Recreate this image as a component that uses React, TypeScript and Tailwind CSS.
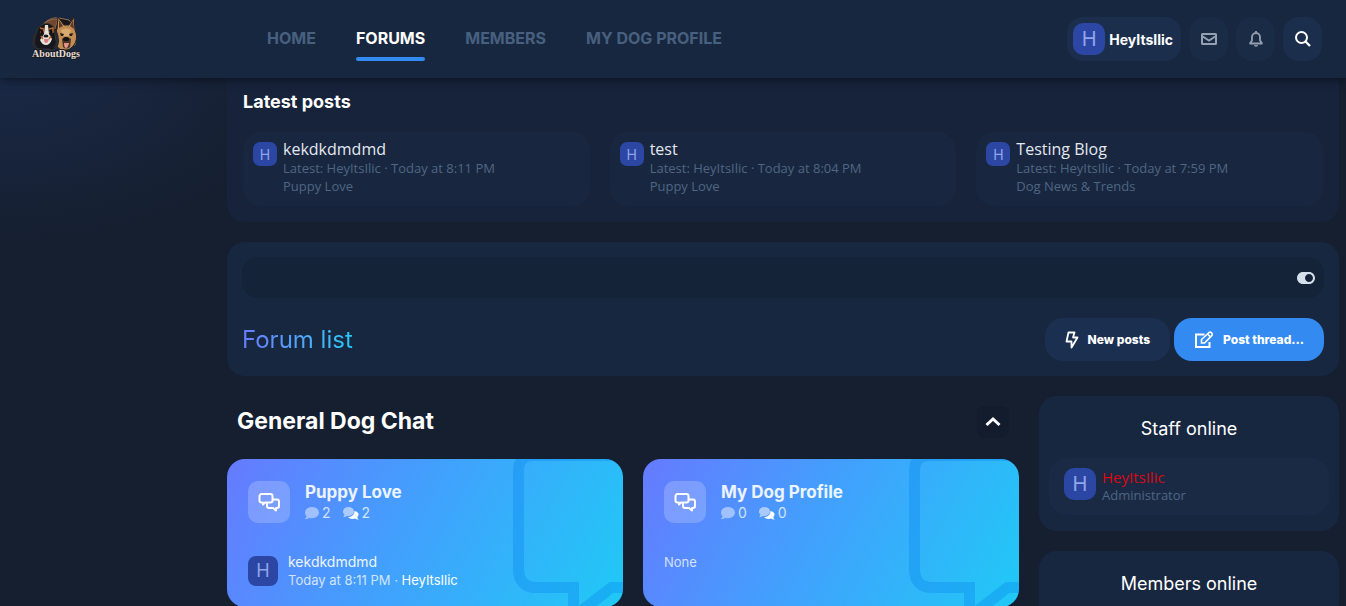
import { FaComment, FaToggleOn } from "react-icons/fa";
import clsx from "clsx";

const navItems = [
  { label: "HOME", active: false },
  { label: "FORUMS", active: true },
  { label: "MEMBERS", active: false },
  { label: "MY DOG PROFILE", active: false }
];

const latestPosts = [
  { title: "kekdkdmdmd", time: "Today at 8:11 PM", forum: "Puppy Love" },
  { title: "test", time: "Today at 8:04 PM", forum: "Puppy Love" },
  { title: "Testing Blog", time: "Today at 7:59 PM", forum: "Dog News & Trends" }
];

type Forum = {
  name: string;
  threads: number;
  messages: number;
  last?: { title: string; time: string; user: string };
};

const forums: Forum[] = [
  {
    name: "Puppy Love",
    threads: 2,
    messages: 2,
    last: { title: "kekdkdmdmd", time: "Today at 8:11 PM", user: "HeyItsIlic" }
  },
  { name: "My Dog Profile", threads: 0, messages: 0 }
];

function Avatar({ className }: { className: string }) {
  return (
    <span
      aria-hidden
      className={clsx(
        "flex shrink-0 items-center justify-center bg-[#2b47a3] font-['Inter',sans-serif] text-[#92a4ec]",
        className
      )}
    >
      H
    </span>
  );
}

function Logo() {
  return (
    <svg viewBox="0 0 48 46" className="h-[46px] w-12" role="img" aria-label="AboutDogs">
      <path d="M6 17C12 4 20 1 27 2l10 2c6 6 8 17 6 25H8z" fill="#17181d" stroke="#957047" />
      <path d="M8 12Q15 2 26 3l-3 10Z" fill="#70482f" stroke="#b88a61" strokeWidth=".6" />
      <path d="M25 13 26 1l6 8h5l5-8 1 13c4 8 0 18-8 20h-6c-7-4-8-13-4-21Z" fill="#c28d53" stroke="#26201c" />
      <path d="m27 4 4 6-4 2Zm14 0-3 6 4 3Z" fill="#5b392b" />
      <path d="M29 14q5-3 10 0l-2 6h-6Z" fill="#d9aa70" />
      <path d="m28 17 4 1-1 2h-2m8-2 4-1-1 3h-2" fill="#241b19" />
      <path d="M30 23q4-4 9 0l-1 8q-4 3-7 0Z" fill="#4b3326" />
      <ellipse cx="34" cy="23" rx="3" ry="2" fill="#0e1015" />
      <path d="M32 27h5q-1 5-3 5t-2-5" fill="#e59588" />
      <path d="M6 12Q14 3 22 11l3 20q-4 5-8 2H8q-7 0-6-8Z" fill="#15171c" stroke="#4b3a31" strokeWidth=".7" />
      <path d="M13 9h3l1 9 3 5q-2 6-6 6t-6-5l4-6Z" fill="#e8e1d7" />
      <path d="m8 12 4 1-1 3H8m9-3 4-1v4h-4m-8 4 2 3m8-3-2 3" stroke="#bb652f" strokeWidth="1.500" fill="none" />
      <circle cx="10" cy="16" r="1.400" fill="#090a0d" />
      <circle cx="19" cy="16" r="1.400" fill="#090a0d" />
      <ellipse cx="14" cy="20" rx="2.500" ry="1.600" fill="#16171b" />
      <path d="M12 23h5q-1 4-3 4t-2-4" fill="#db7c7e" />
      <path d="M3 18C1 25 1 31 5 33m18-19c4 9 3 16-1 18" stroke="#292a30" strokeWidth="3" fill="none" />
      <text x="24" y="41" textAnchor="middle" fontFamily="Liberation Serif, serif" fontSize="10" fontWeight="700" fill="#e2ddd8" stroke="#1b1b20" strokeWidth="2" paintOrder="stroke">
        AboutDogs
      </text>
    </svg>
  );
}

function ChatsIcon({ className }: { className: string }) {
  return (
    <svg viewBox="0 0 24 24" className={className} fill="none" stroke="currentColor" strokeWidth="2" strokeLinejoin="round" aria-hidden>
      <path d="M8 12.500 6 14.500v-2H4.500a2 2 0 0 1-2-2V6a2 2 0 0 1 2-2h9a2 2 0 0 1 2 2v4.500a2 2 0 0 1-2 2Z" />
      <path d="M16 9.500h4a2 2 0 0 1 2 2V16a2 2 0 0 1-2 2h-1v2.500L16 18h-4a2 2 0 0 1-2-2v-3.500" />
    </svg>
  );
}

function MailIcon() {
  return (
    <svg viewBox="0 0 18 14" className="h-3.5 w-[18px]" fill="none" stroke="currentColor" strokeWidth="2" aria-hidden>
      <rect x="2" y="2" width="14" height="10" rx=".5" />
      <path d="m2 4 7 4.500L16 4" />
    </svg>
  );
}

function BellIcon() {
  return (
    <svg viewBox="0 0 16 18" className="h-[18px] w-4" fill="none" stroke="currentColor" strokeWidth="1.800" strokeLinejoin="round" aria-hidden>
      <path d="M8 3C5.500 3 4 5 4 7v3.500L2.200 13v.5h11.600V13L12 10.500V7c0-2-1.500-4-4-4ZM8 1v2" />
      <path d="M6 15.500q2 2 4 0Z" fill="currentColor" strokeWidth=".6" />
    </svg>
  );
}

function SearchIcon() {
  return (
    <svg viewBox="0 0 18 18" className="size-[18px]" fill="none" stroke="currentColor" strokeWidth="2" aria-hidden>
      <circle cx="7.500" cy="7.500" r="5.500" />
      <path d="m11.500 11.500 4.500 4.500" strokeWidth="2.300" />
    </svg>
  );
}

function BoltIcon() {
  return (
    <svg viewBox="0 0 14 18" className="h-[18px] w-3.5" fill="none" stroke="currentColor" strokeWidth="1.800" strokeLinejoin="round" aria-hidden>
      <path d="M3.500 1.500h6l-1.500 5h4.500l-6 10v-6h-5Z" />
    </svg>
  );
}

function ComposeIcon() {
  return (
    <svg viewBox="0 0 20 18" className="h-[18px] w-5" fill="none" stroke="currentColor" strokeWidth="2" aria-hidden>
      <path d="M10.500 3.500H2V16h13.500v-5" />
      <path d="m7.500 8.500 7.500-7q1.200-.9 2.500.3t.5 2.600L10.500 12H7.500Zm6-5.500 3 3" strokeWidth="1.600" />
    </svg>
  );
}

function CardArt() {
  return (
    <svg viewBox="0 0 110 148" className="absolute top-0 right-0 h-[148px] w-[110px] text-[#0a85ee]/35" fill="none" stroke="currentColor" strokeWidth="11" aria-hidden>
      <path d="M115-3.500H20Q5.500-3.500 5.500 12v98q0 18.500 18 18.500h37V158l38-29.500h18" />
    </svg>
  );
}

function ForumCard({ forum }: { forum: Forum }) {
  return (
    <article className="relative h-[148px] overflow-hidden rounded-[18px] bg-[linear-gradient(118deg,#667aff_0%,#42a0fd_45%,#20c9f6_100%)] px-[21px] pt-[22px]">
      <CardArt />
      <div className="relative flex gap-[15px]">
        <span className="flex size-[42px] shrink-0 items-center justify-center rounded-[10px] bg-white/20 text-white">
          <ChatsIcon className="size-6" />
        </span>
        <div>
          <h3 className="text-[17px] leading-[22px] font-bold text-white/90">
            <a href="#forum">{forum.name}</a>
          </h3>
          <div className="flex items-center gap-3 text-[14px] leading-5 text-white/75">
            <span className="flex items-center gap-[3px]">
              <FaComment aria-label="Threads" className="size-3.5 text-white/45" />
              {forum.threads}
            </span>
            <span className="flex items-center gap-[3px]">
              <svg viewBox="0 0 16 13" className="h-[13px] w-4" role="img" aria-label="Messages">
                <path d="M11.500 4c0 4-3 6-6.500 6 1.500 2 5 2.500 7 1.500 1.500 1 2.500 1 3.500 1-.8-1-1.200-1.800-1.200-2.500C17 7.500 15 4.500 11.500 4Z" fill="#fff" />
                <path d="M5.500 0C2.500 0 0 2 0 4.500c0 1.300.6 2.300 1.500 3C1.300 8.500.8 9.300.2 10 2 10 3 9.500 4 8.900 8.500 9.500 11 7 11 4.500 11 2 8.500 0 5.500 0Z" fill="#a9cbff" />
              </svg>
              {forum.messages}
            </span>
          </div>
        </div>
      </div>
      {forum.last ? (
        <div className="relative mt-[30px] flex items-center gap-2.5 text-[13px] leading-[18px] text-white/75">
          <Avatar className="size-[30px] rounded-lg text-[18px]" />
          <div>
            <a href="#thread" className="block text-[14px] text-white/90">{forum.last.title}</a>
            <p>
              {forum.last.time} · <a href="#user" className="text-white">{forum.last.user}</a>
            </p>
          </div>
        </div>
      ) : (
        <p className="relative mt-[30px] text-[13px] leading-[18px] text-white/75">None</p>
      )}
    </article>
  );
}

function Header() {
  return (
    <header className="relative z-10 flex h-[78px] items-center bg-[#182740] pr-6 pl-8 font-['Inter',sans-serif] shadow-[0_2px_8px_rgba(5,10,20,0.6)]">
      <a href="#top" className="w-[235px] shrink-0">
        <Logo />
      </a>
      <nav className="flex grow gap-10 self-stretch text-[16px] font-bold">
        {navItems.map((item) => (
          <a
            key={item.label}
            href="#nav"
            className={clsx(
              "relative flex items-center pb-0.5",
              item.active ? "text-white" : "text-[#48607f]"
            )}
          >
            {item.label}
            {item.active ? (
              <span className="absolute inset-x-0 bottom-[17px] h-1 rounded-full bg-[#338bf1]" />
            ) : null}
          </a>
        ))}
      </nav>
      <div className="flex gap-2">
        <button className="flex h-11 items-center gap-1 rounded-2xl bg-[#1b2e4c] pr-2 pl-1.5 text-[14px] font-bold text-white">
          <Avatar className="size-8 rounded-[10px] text-[20px] font-normal" />
          HeyItsIlic
        </button>
        <button aria-label="Inbox" className="flex h-11 w-[39px] items-center justify-center rounded-2xl bg-[#192b45] text-[#95a0b1]">
          <MailIcon />
        </button>
        <button aria-label="Alerts" className="flex h-11 w-[39px] items-center justify-center rounded-2xl bg-[#192b45] text-[#95a0b1]">
          <BellIcon />
        </button>
        <button aria-label="Search" className="flex h-11 w-[39px] items-center justify-center rounded-2xl bg-[#1b2e4c] text-white">
          <SearchIcon />
        </button>
      </div>
    </header>
  );
}

export default function App() {
  return (
    <div className="h-screen overflow-hidden bg-[#151f30] bg-[radial-gradient(300px_170px_at_0_70px,#1a2947,#151f30)] font-['Open_Sans',sans-serif] text-white">
      <Header />
      <main className="mr-[7px] ml-[227px]">
        <section className="rounded-b-[18px] bg-[#17233a] px-4 pt-3 pb-4">
          <h2 className="font-['Inter',sans-serif] text-[18px] leading-6 font-bold">Latest posts</h2>
          <div className="mt-[18px] grid grid-cols-3 gap-5">
            {latestPosts.map((post) => (
              <article key={post.title} className="flex gap-1.5 rounded-[18px] bg-[#18263f] px-2.5 pt-[7px] pb-[11px]">
                <Avatar className="mt-[3px] size-6 rounded-[7px] text-[14px]" />
                <div className="text-[13px] leading-[18px] font-medium text-[#4f6683]">
                  <a href="#thread" className="block text-[16px] leading-5 text-[#e4e8ef]">{post.title}</a>
                  <p>Latest: HeyItsIlic · {post.time}</p>
                  <a href="#forum">{post.forum}</a>
                </div>
              </article>
            ))}
          </div>
        </section>

        <section className="mt-5 rounded-[18px] bg-[#182740] p-[15px]">
          <div className="flex h-[41px] items-center justify-end rounded-2xl bg-[#152338] pr-[9px]">
            <button aria-label="Toggle width" className="text-[#d5e0ec]">
              <FaToggleOn className="size-[18px]" />
            </button>
          </div>
          <div className="mt-5 flex items-center justify-between">
            <h1 className="bg-linear-to-r from-[#667aff] to-[#20c9f6] bg-clip-text font-['Inter',sans-serif] text-[24px] leading-8 font-normal text-transparent">
              Forum list
            </h1>
            <div className="flex gap-1 font-['Inter',sans-serif] text-[12px] font-extrabold">
              <button className="flex h-[43px] items-center gap-[9px] rounded-[18px] bg-[#1b2f50] px-5">
                <BoltIcon />
                New posts
              </button>
              <button className="flex h-[43px] items-center gap-[9px] rounded-[18px] bg-[#338bf1] px-5">
                <ComposeIcon />
                Post thread...
              </button>
            </div>
          </div>
        </section>

        <div className="mt-5 flex gap-5 font-['Inter',sans-serif]">
          <section className="grow">
            <div className="flex h-[63px] items-center justify-between pr-2.5 pb-3 pl-2.5">
              <h2 className="text-[23px] font-bold">General Dog Chat</h2>
              <button aria-label="Collapse" className="flex size-8 items-center justify-center rounded-lg bg-[#131c2c]">
                <svg viewBox="0 0 16 16" className="size-4" fill="none" stroke="currentColor" strokeWidth="3" aria-hidden>
                  <path d="m1.500 11 6.500-6 6.500 6" />
                </svg>
              </button>
            </div>
            <div className="grid grid-cols-[396fr_376fr] gap-5">
              {forums.map((forum) => (
                <ForumCard key={forum.name} forum={forum} />
              ))}
            </div>
          </section>
          <aside className="w-[300px] shrink-0">
            <section className="rounded-[18px] bg-[#182740] px-2.5 pt-[21px] pb-4">
              <h3 className="text-center text-[18px] leading-6">Staff online</h3>
              <div className="mt-[17px] flex items-start gap-1.5 rounded-[18px] bg-[#1a2a45] px-[15px] pt-2.5 pb-[11px] font-['Open_Sans',sans-serif]">
                <Avatar className="size-8 rounded-[10px] text-[20px]" />
                <div>
                  <a href="#user" className="block text-[15px] leading-[18px] text-[#dc0710]">HeyItsIlic</a>
                  <p className="text-[13px] leading-[18px] font-medium text-[#4f6683]">Administrator</p>
                </div>
              </div>
            </section>
            <section className="mt-5 rounded-[18px] bg-[#182740] px-2.5 pt-[21px] pb-6">
              <h3 className="text-center text-[18px] leading-6">Members online</h3>
            </section>
          </aside>
        </div>
      </main>
    </div>
  );
}
